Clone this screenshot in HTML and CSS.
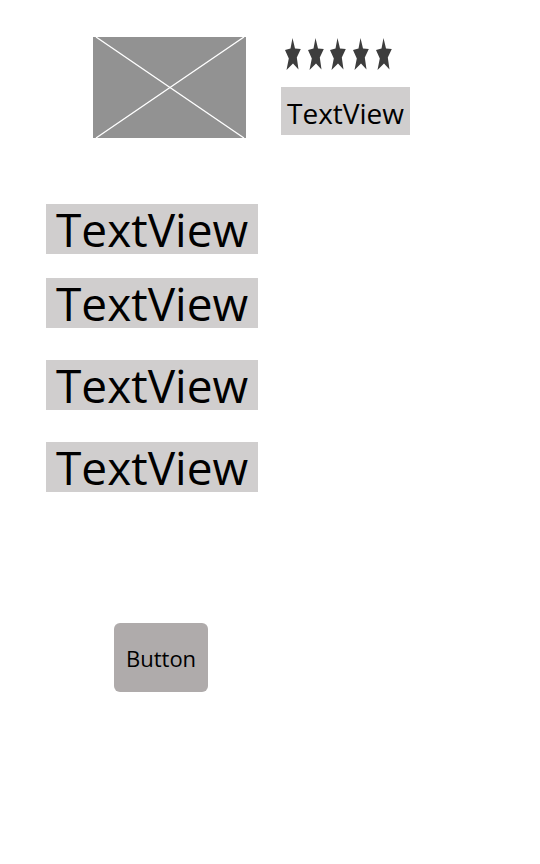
FILE: index.html
```html
<!DOCTYPE html>
<html lang="en">
<head>
<meta charset="utf-8">
<meta name="viewport" content="width=device-width, initial-scale=1">
<title>TextView</title>
<link rel="stylesheet" href="styles.css">
</head>
<body>
<main class="screen">
  <header class="summary">
    <svg class="picture" viewBox="0 0 153 101" role="img" aria-label="Image placeholder">
      <rect width="153" height="101" fill="#929292"/>
      <path d="M3 0L151 101M151 0L3 101" stroke="#fff" stroke-width="1.3"/>
    </svg>
    <div class="details">
      <svg class="rating" viewBox="0 0 108 34" role="img" aria-label="5 stars">
        <defs>
          <path id="star" d="M7.500 -1L10 9.500L15.800 10L11.800 18.500L13.500 30.500L8 24.500L1.500 31L3.800 19.500L0 11L5.500 9.500Z"/>
        </defs>
        <g fill="#3d3d3d">
          <use href="#star"/>
          <use href="#star" x="23"/>
          <use href="#star" x="45"/>
          <use href="#star" x="68"/>
          <use href="#star" x="91"/>
        </g>
      </svg>
      <div class="label label-small">TextView</div>
    </div>
  </header>
  <section class="fields">
    <div class="field-pair">
      <div class="label">TextView</div>
      <div class="label">TextView</div>
    </div>
    <div class="label">TextView</div>
    <div class="label">TextView</div>
  </section>
  <button class="action" type="button">Button</button>
</main>
</body>
</html>
```
FILE: styles.css
```css
* {
  box-sizing: border-box;
}

body {
  margin: 0;
  background: #fff;
  color: #000;
  font-family: "Open Sans", "Noto Sans", sans-serif;
}

.screen {
  display: flex;
  flex-direction: column;
  align-items: flex-start;
  padding: 37px 24px 24px 46px;
}

.summary {
  display: flex;
  align-items: flex-start;
  gap: 35px;
  margin-left: 47px;
}

.picture {
  display: block;
  width: 153px;
}

.details {
  display: flex;
  flex-direction: column;
  align-items: flex-start;
  gap: 14px;
  padding-top: 2px;
}

.rating {
  display: block;
  width: 108px;
  margin-left: 4px;
  overflow: visible;
}

.label {
  padding: 0 10px;
  background: #d0cece;
  font-size: 46px;
  line-height: 50px;
  white-space: nowrap;
}

.label-small {
  padding: 4px 6px 0;
  font-size: 28px;
  line-height: 44px;
}

.fields {
  display: flex;
  flex-direction: column;
  align-items: flex-start;
  gap: 32px;
  margin-top: 66px;
}

.field-pair {
  display: flex;
  flex-direction: column;
  gap: 24px;
}

.action {
  margin: 131px 0 0 68px;
  padding: 2px 12px 0;
  border: 0;
  border-radius: 6px;
  background: #afabab;
  color: #000;
  font-family: inherit;
  font-size: 22px;
  line-height: 67px;
}
```
